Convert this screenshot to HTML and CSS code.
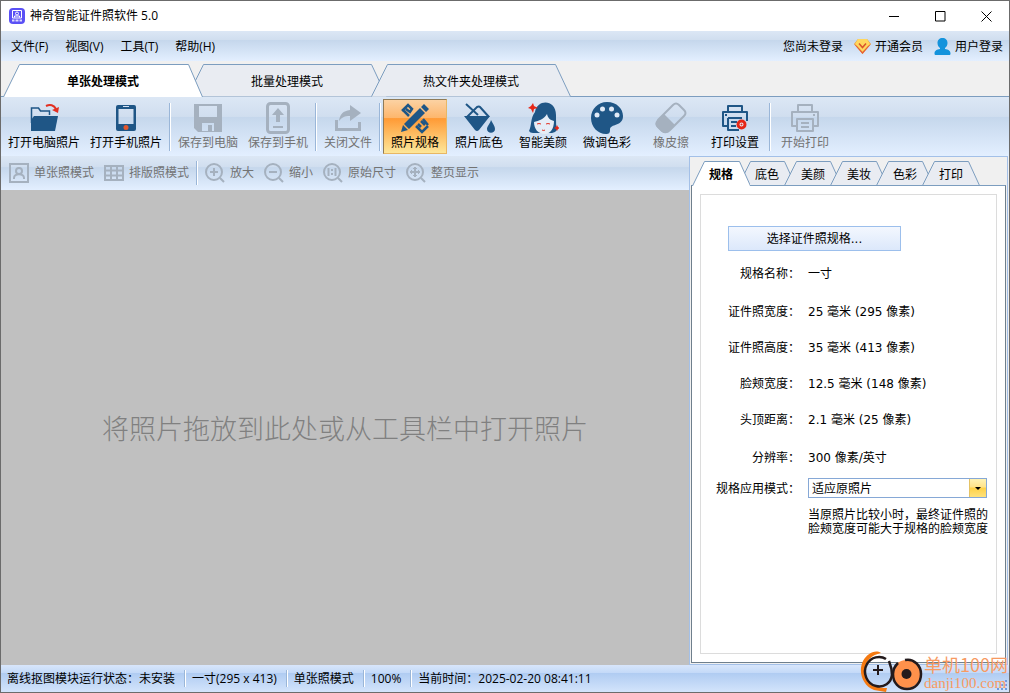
FILE: index.html
```html
<!DOCTYPE html>
<html lang="zh-CN">
<head>
<meta charset="utf-8">
<title>神奇智能证件照软件 5.0</title>
<link rel="stylesheet" href="styles.css">
</head>
<body>
<div class="window">
  <header class="titlebar">
    <svg class="app-icon" viewBox="0 0 16 16" width="16" height="16"><rect width="16" height="16" rx="4" fill="#5a50f5"/><g fill="none" stroke="#fff"><path d="M3.500 2.500h9v7.500h-9z"/><circle cx="8" cy="5.500" r="1.500"/><path d="M5.500 9.500V8h5v1.500"/><path d="M3 12.500h2.500M6.500 12.500h3M10.500 12.500H13" stroke-width="2" opacity=".8"/></g></svg>
    <h1 class="title">神奇智能证件照软件 5.0</h1>
    <div class="window-buttons">
      <button aria-label="最小化"><svg viewBox="0 0 11 11" width="11" height="11"><path d="M0 5.500h10"/></svg></button>
      <button aria-label="最大化"><svg viewBox="0 0 11 11" width="11" height="11"><path d="M.5.500h9.500v9.500H.5z"/></svg></button>
      <button aria-label="关闭"><svg viewBox="0 0 11 11" width="11" height="11"><path d="M.5.500l10 10M10.500.500l-10 10"/></svg></button>
    </div>
  </header>

  <nav class="menubar">
    <button>文件(F)</button>
    <button>视图(V)</button>
    <button>工具(T)</button>
    <button>帮助(H)</button>
    <div class="account">
      <span>您尚未登录</span>
      <button><svg viewBox="0 0 17 17" width="17" height="17"><path d="M4 1h9l4 5-8.500 10L0 6z" fill="#f0a030"/><path d="M4 1h9l3 5-7.500 8L1 6z" fill="#ffd75e"/><path d="M0 6l8.500 10L17 6l-3 2-5.500 6L3 8z" fill="#e5603a"/><path d="M5 5.500l3.500 4 3.500-4" fill="none" stroke="#d9542c" stroke-width="1.500"/></svg>开通会员</button>
      <button><svg viewBox="0 0 17 17" width="17" height="17" fill="#1493dc"><path d="M8.500 0c3 0 5 2 5 5 0 2-1 4-2.500 5v1c3 .5 5.500 1.500 5.500 4.500 0 1-.5 1.500-1.500 1.500H2c-1 0-1.500-.5-1.500-1.500C.5 12.500 3 11.500 6 11v-1C4.500 9 3.500 7 3.500 5c0-3 2-5 5-5z"/></svg>用户登录</button>
    </div>
  </nav>

  <div class="mode-tabs" role="tablist">
    <button class="mode-tab selected" role="tab" aria-selected="true"><svg viewBox="0 0 200 33"><path d="M.5 33L16.500.500h169L199.500 33"/></svg><span>单张处理模式</span></button>
    <button class="mode-tab" role="tab"><svg viewBox="0 0 200 33"><path d="M.5 32.500L16.500.500h168l15 32"/></svg><span>批量处理模式</span></button>
    <button class="mode-tab" role="tab"><svg viewBox="0 0 200 33"><path d="M.5 32.500L16.500.500h168l15 32"/></svg><span>热文件夹处理模式</span></button>
  </div>

  <div class="toolbar" role="toolbar">
    <button class="tool wide"><svg viewBox="0 0 32 32"><path d="M3.500 21V6h7l2 3h9v4" fill="none" stroke="#1f5686" stroke-width="1.500"/><path d="M6 14h24l-3 15H3V18z" fill="#1f5686"/><path d="M18 4c4-2 8-1 10 3" fill="none" stroke="#e33022" stroke-width="2"/><path d="M31 5l-1 6-6-3z" fill="#e33022"/></svg>打开电脑照片</button>
    <button class="tool wide"><svg viewBox="0 0 32 32"><path fill-rule="evenodd" d="M8 3h16q2 0 2 2v22q0 2-2 2H8q-2 0-2-2V5q0-2 2-2zM8.500 7v15h15V7zM13 4v1h6V4z" fill="#1f5686"/><circle cx="16" cy="25.500" r="2.500" fill="#e4572c"/></svg>打开手机照片</button>
    <i class="sep"></i>
    <button class="tool medium" disabled><svg viewBox="0 0 32 32"><path fill="#a5b1bf" fill-rule="evenodd" d="M2 2h28v28H6l-4-4zM7 4v11h18V4zM10 21v8h12v-8zM16 23h4v6h-4z"/></svg>保存到电脑</button>
    <button class="tool medium" disabled><svg viewBox="0 0 32 32"><rect x="5.500" y="1.500" width="21" height="29" rx="3" fill="none" stroke="#a5b1bf" stroke-width="3"/><path d="M16 6l6 7h-4v7h-4v-7h-4zM11 24h10v2H11z" fill="#a5b1bf"/></svg>保存到手机</button>
    <i class="sep"></i>
    <button class="tool small" disabled><svg viewBox="0 0 32 32"><path d="M18 3l11 8-11 8v-5c-5 0-8 1-11 5 1-7 4-10 11-11z" fill="#a5b1bf"/><path d="M4.500 18v9.500h23V20" fill="none" stroke="#a5b1bf" stroke-width="3"/></svg>关闭文件</button>
    <i class="sep"></i>
    <button class="tool active"><svg viewBox="0 0 32 32"><path fill="#1f5686" d="M25 2l5 5-3 3-5-5zM21 6l5 5L10 27l-5-5zM4 23l5 5-7 2z"/><g fill="none" stroke="#1f5686" stroke-width="2.500"><path d="M3 9l6-6 4 4-2 3-4-3M4 8l6 6"/><path d="M17 24l6 6 6-6M19 22l3 3M22 19l4 4M24 17l5 6"/></g></svg>照片规格</button>
    <button class="tool"><svg viewBox="0 0 32 32" fill="#1f5686"><path d="M3 2l12 11" stroke="#1f5686" stroke-width="2"/><path d="M4 15L14 5q2-1 3 0l9 10" fill="none" stroke="#1f5686" stroke-width="2"/><path d="M1 14h26L16 28q-2 2-4 0zM28 18c2 4 4 6 4 9 0 5-8 5-8 0 0-3 3-5 4-9z"/></svg>照片底色</button>
    <button class="tool"><svg viewBox="0 0 32 32"><path d="M8 10C10-3 29-3 29 13c0 7 0 12 1 15q-2 3-5 3H6q-3 0-4-2c3-6 1-12 6-19z" fill="#1f5686"/><path d="M7 20c5-1 10-3 13-8 1 4 3 6 7 7 0 8-4 13-9 13C11 32 7 27 7 20z" fill="#e5edf7"/><path d="M10 22q2-1 4 0M19 22q2-1 4 0M15 28q2 1 3 0" fill="none" stroke="#e33022"/><path d="M6 1l1 3 4 2-4 1-1 4-2-4-3-1 3-2zM30 23l1 2 2 1-2 1-1 2-1-2-2-1 2-1z" fill="#e62717"/></svg>智能美颜</button>
    <button class="tool"><svg viewBox="0 0 32 32"><path d="M16 0c10 0 16 7 16 14 0 11-13 7-13 14 0 3-1 4-4 4C7 32 0 25 0 16S7 0 16 0z" fill="#1f5686"/><g fill="#e1eaf6"><circle cx="6" cy="13" r="2.500"/><circle cx="11.500" cy="7" r="2.500"/><circle cx="20.500" cy="7" r="2.500"/><circle cx="26" cy="13" r="2.500"/></g></svg>微调色彩</button>
    <button class="tool" disabled><svg viewBox="0 0 32 32"><path d="M18 3q3-3 6 0l5 5q3 3 0 6L15 28q-4 4-8 1l-4-4q-3-3 0-7z" fill="none" stroke="#a5b1bf" stroke-width="2"/><path d="M9 12l11 11-6 6q-3 3-7 1l-5-5q-3-3 0-6z" fill="#a5b1bf"/></svg>橡皮擦</button>
    <button class="tool"><svg viewBox="0 0 32 32"><path d="M9 10V4h14v6M8 24H4V10h24v9M9 16v12h11M9 16h14M12 20h6M12 24h5" fill="none" stroke="#1f5686" stroke-width="2" stroke-linejoin="round"/><path d="M6 12h2v2H6z" fill="#1f5686"/><circle cx="22.500" cy="22.500" r="3.500" fill="#e5edf7" stroke="#e62717" stroke-width="3"/><circle cx="22.500" cy="22.500" r="1" fill="#e62717"/></svg>打印设置</button>
    <i class="sep"></i>
    <button class="tool" disabled><svg viewBox="0 0 32 32"><path d="M9 10V3h14v7M8 24H3V10h26v14h-5M8 17h16v12H8zM12 21h8M12 25h8M24 13h2" fill="none" stroke="#a5b1bf" stroke-width="2" stroke-linejoin="round"/></svg>开始打印</button>
  </div>

  <main class="workspace">
    <section class="editor">
      <div class="viewbar">
        <button disabled><svg viewBox="0 0 20 20"><path d="M1 1h18v18H1z"/><circle cx="10" cy="8" r="3"/><path d="M5 16v-1c0-5 10-5 10 0v1"/></svg>单张照模式</button>
        <button disabled><svg viewBox="0 0 20 20"><path d="M1 3h18v14H1zM1 7.500h18M1 12.500h18M7 3v14M13 3v14"/></svg>排版照模式</button>
        <i class="sep"></i>
        <button disabled><svg viewBox="0 0 20 20"><circle cx="9" cy="9" r="8"/><path d="M15 15l4 4M5 9h8M9 5v8"/></svg>放大</button>
        <button disabled><svg viewBox="0 0 20 20"><circle cx="9" cy="9" r="8"/><path d="M15 15l4 4M5 9h8"/></svg>缩小</button>
        <button disabled><svg viewBox="0 0 20 20"><circle cx="9" cy="9" r="8"/><path d="M15 15l4 4M5.500 5v8M12.500 5v8M9 6v2M9 10v2"/></svg>原始尺寸</button>
        <button disabled><svg viewBox="0 0 20 20"><circle cx="9" cy="9" r="8"/><path d="M15 15l4 4M4 9h10M9 4v10"/><path class="thin" d="M7 6l2-2 2 2M7 12l2 2 2-2M6 7L4 9l2 2M12 7l2 2-2 2"/></svg>整页显示</button>
      </div>
      <div class="canvas"><p>将照片拖放到此处或从工具栏中打开照片</p></div>
    </section>

    <aside class="side">
      <div class="side-tabs" role="tablist">
        <button class="side-tab selected" role="tab" aria-selected="true"><svg viewBox="0 0 58 25"><path d="M.5 25L12.500.500h35L58.500 25"/></svg><span>规格</span></button>
        <button class="side-tab" role="tab"><svg viewBox="0 0 58 25"><path d="M.5 24.500L12.500.500h34l11 24"/></svg><span>底色</span></button>
        <button class="side-tab" role="tab"><svg viewBox="0 0 58 25"><path d="M.5 24.500L12.500.500h34l11 24"/></svg><span>美颜</span></button>
        <button class="side-tab" role="tab"><svg viewBox="0 0 58 25"><path d="M.5 24.500L12.500.500h34l11 24"/></svg><span>美妆</span></button>
        <button class="side-tab" role="tab"><svg viewBox="0 0 58 25"><path d="M.5 24.500L12.500.500h34l11 24"/></svg><span>色彩</span></button>
        <button class="side-tab" role="tab"><svg viewBox="0 0 58 25"><path d="M.5 24.500L12.500.500h34l11 24"/></svg><span>打印</span></button>
      </div>
      <div class="side-page">
        <div class="group">
          <button class="choose">选择证件照规格...</button>
          <dl class="specs">
            <dt>规格名称：</dt><dd>一寸</dd>
            <dt>证件照宽度：</dt><dd>25 毫米 (295 像素)</dd>
            <dt>证件照高度：</dt><dd>35 毫米 (413 像素)</dd>
            <dt>脸颊宽度：</dt><dd>12.5 毫米 (148 像素)</dd>
            <dt>头顶距离：</dt><dd>2.1 毫米 (25 像素)</dd>
            <dt>分辨率：</dt><dd>300 像素/英寸</dd>
          </dl>
          <div class="apply">
            <label for="apply-mode">规格应用模式：</label>
            <div class="combo">
              <select id="apply-mode"><option>适应原照片</option></select>
              <span class="arrow"></span>
            </div>
            <p class="hint">当原照片比较小时，最终证件照的脸颊宽度可能大于规格的脸颊宽度</p>
          </div>
        </div>
      </div>
    </aside>
  </main>

  <footer class="statusbar">
    <span>离线抠图模块运行状态：未安装</span><i class="sep"></i>
    <span>一寸(295 x 413)</span><i class="sep"></i>
    <span>单张照模式</span><i class="sep"></i>
    <span>100%</span><i class="sep"></i>
    <span>当前时间：2025-02-20 08:41:11</span>
    <svg class="grip" viewBox="0 0 12 12" width="12" height="12" fill="#6f9bdc"><path d="M8 0h2v2H8zM4 4h2v2H4zM8 4h2v2H8zM0 8h2v2H0zM4 8h2v2H4zM8 8h2v2H8z"/></svg>
  </footer>

  <div class="watermark">
    <svg viewBox="0 0 64 42" width="64" height="42"><path d="M22 3C16-1 8 4 4 11c-5 10-1 24 11 29l12 2 1-4C16 38 6 33 6 21 6 10 13 5 22 3z" fill="#f57a12"/><path d="M27 9C21 5 12 7 8 14c-5 9 0 20 9 22 8 2 15-3 16-11 0-5-1-9-3-14" fill="none" stroke="#231a1c" stroke-width="2.500"/><path d="M19 15v10M14 20h10" stroke="#231a1c" stroke-width="2"/><circle cx="47.500" cy="24" r="14" fill="#ff914b"/><path d="M46 10c9-2 16 6 16 14 0 9-6 15-14 15S34 33 34 24c0-5 2-8 5-11" fill="none" stroke="#231a1c" stroke-width="2.500"/><circle cx="47.500" cy="24" r="5" fill="#231a1c"/></svg>
    <div><b>单机100网</b><span>danji100.com</span></div>
  </div>
</div>
</body>
</html>
```
FILE: styles.css
```css
* { box-sizing: border-box; }
body {
  margin: 0;
  font: 12px/16px "Open Sans", "Noto Sans CJK SC", sans-serif;
  color: #000;
}
button, select { font: inherit; color: inherit; padding: 0; border: 0; background: none; }
h1, p, dl, dd { margin: 0; }
svg { display: block; flex: none; }
button { white-space: nowrap; }

.window {
  position: relative;
  display: flex;
  flex-direction: column;
  min-height: 100vh;
  border: 1px solid #6b6b6b;
  background: #f0f0f0;
}

.titlebar { display: flex; align-items: center; height: 30px; padding-left: 8px; background: #fff; }
.title { margin-left: 5px; font-size: 12px; font-weight: 400; }
.window-buttons { display: flex; margin-left: auto; }
.window-buttons button { display: flex; align-items: center; justify-content: center; width: 46px; height: 30px; }
.window-buttons svg { fill: none; stroke: #000; }

.menubar {
  display: flex;
  align-items: center;
  gap: 17px;
  height: 30px;
  padding: 1px 6px 0 10px;
  background: linear-gradient(#dce7f5, #d0deef 30%, #c5d7ec 31%, #e3efff);
}
.account { display: flex; align-items: center; gap: 11px; margin-left: auto; }
.account button { display: flex; align-items: center; gap: 4px; }

.mode-tabs {
  display: flex;
  height: 36px;
  padding: 3px 2px 0;
  border-bottom: 1px solid #7c9dbf;
}
.mode-tab { display: grid; place-items: center; width: 200px; height: 33px; margin-right: -16px; }
.mode-tab > *, .side-tab > * { grid-area: 1 / 1; }
.mode-tab svg { width: 200px; height: 33px; }
.mode-tab svg, .side-tab svg { fill: #e9ecf2; stroke: #7c9dbf; }
.mode-tab span, .side-tab span { z-index: 1; padding-top: 2px; }
.mode-tab.selected, .side-tab.selected { z-index: 2; font-weight: 700; }
.selected svg { fill: #fff; }

.toolbar {
  display: flex;
  align-items: center;
  height: 59px;
  padding: 0 2px;
  background: linear-gradient(#dce7f5, #d0deef 33%, #c5d7ec 34%, #e3efff);
}
.tool {
  display: flex;
  flex-direction: column;
  align-items: center;
  width: 64px;
  height: 55px;
  padding-top: 2px;
  border: 1px solid transparent;
}
.tool svg { width: 32px; height: 32px; margin-bottom: 1px; }
.wide { width: 82px; }
.medium { width: 70px; }
.small { width: 58px; }
.tool:disabled, .viewbar button:disabled { color: #737373; }
.active {
  border-color: #8f7b58 #e8b765 #e8b765 #8f7b58;
  background: linear-gradient(#fcd2a3, #fdb66c 34%, #ff9a35 35%, #fde79a);
}
.sep {
  flex: none;
  width: 2px;
  height: 48px;
  margin: 0 2px;
  border-left: 1px solid #9ab6d8;
  border-right: 1px solid #fff;
}

.workspace { display: flex; flex: 1; padding-right: 1px; }
.editor { display: flex; flex: 1; flex-direction: column; min-width: 0; }
.viewbar {
  display: flex;
  align-items: center;
  height: 34px;
  padding-left: 3px;
  background: linear-gradient(#dce7f5, #d0deef 33%, #c5d7ec 34%, #e3efff);
}
.viewbar button { display: flex; align-items: center; gap: 5px; padding: 0 5px; }
.viewbar svg { width: 20px; height: 20px; fill: none; stroke: #a5b1bf; stroke-width: 2; }
.viewbar .thin { stroke-width: 1; }
.viewbar .sep { height: 24px; }
.canvas { display: grid; flex: 1; place-items: center; background: #c0c0c0; }
.canvas p { font: 300 27px/36px "Noto Sans CJK SC", sans-serif; color: #808080; }

.side {
  display: flex;
  flex-direction: column;
  width: 319px;
  padding: 4px 1px 1px;
  border: 1px solid #a3c0e8;
  font-family: "DejaVu Sans", "Noto Sans CJK SC", sans-serif;
}
.side-tabs { display: flex; height: 25px; margin-bottom: -1px; padding-left: 1px; }
.side-tab { display: grid; place-items: center; width: 58px; height: 25px; margin-right: -12px; }
.side-tab svg { width: 58px; height: 25px; }
.side-page { display: flex; flex: 1; padding: 8px; border: 1px solid #6f7f8c; border-top-color: #7c9dbf; background: #fff; }
.side-tab.selected { position: relative; }
.group { flex: 1; padding: 31px 9px 8px 13px; border: 1px solid #dcdcdc; }
.choose {
  display: block;
  width: 173px;
  height: 25px;
  margin-left: 14px;
  padding-top: 1px;
  border: 1px solid #9cbfec;
  background: linear-gradient(#f3f7fe, #dce8fb);
}
.specs {
  display: grid;
  grid-template-columns: 86px 1fr;
  grid-template-rows: 38px 36px 36px 36px 38px 28px;
  column-gap: 8px;
  margin-top: 15px;
}
dt, .apply label { text-align: right; white-space: nowrap; }
.apply { display: grid; grid-template-columns: 86px 1fr; column-gap: 8px; align-items: center; }
.apply label { padding-top: 2px; }
.combo { display: flex; height: 20px; border: 1px solid #86a8d6; }
.combo select { flex: 1; min-width: 0; padding: 1px 0 0 3px; appearance: none; background: #fff; }
.arrow {
  display: grid;
  place-items: center;
  width: 17px;
  border-left: 1px solid #e5c365;
  background: linear-gradient(#fff3b5, #ffe38a 45%, #ffd146 50%, #ffe27c);
  pointer-events: none;
}
.arrow::before { content: ""; border: 3px solid transparent; border-top-color: #000; border-bottom: 0; }
.hint { grid-column: 2; margin: 10px -2px 0 0; line-height: 14px; }

.statusbar {
  display: flex;
  align-items: center;
  height: 27px;
  background: linear-gradient(#d8e6fb, #c3d9f8 30%, #b0ccf2 31%, #d3e4fb);
}
.statusbar span { padding: 0 9px 0 6px; }
.statusbar .sep { height: 17px; margin: 0; }
.grip { align-self: flex-end; margin-left: auto; }

.watermark {
  position: absolute;
  right: 1px;
  bottom: 0;
  display: flex;
  align-items: flex-end;
  color: #f79a62;
  pointer-events: none;
}
.watermark div { display: flex; flex-direction: column; margin-left: 1px; }
.watermark b { font: 400 18px/20px "Noto Sans CJK SC", sans-serif; }
.watermark span { font: 15px/18px "Liberation Serif", serif; }
```
